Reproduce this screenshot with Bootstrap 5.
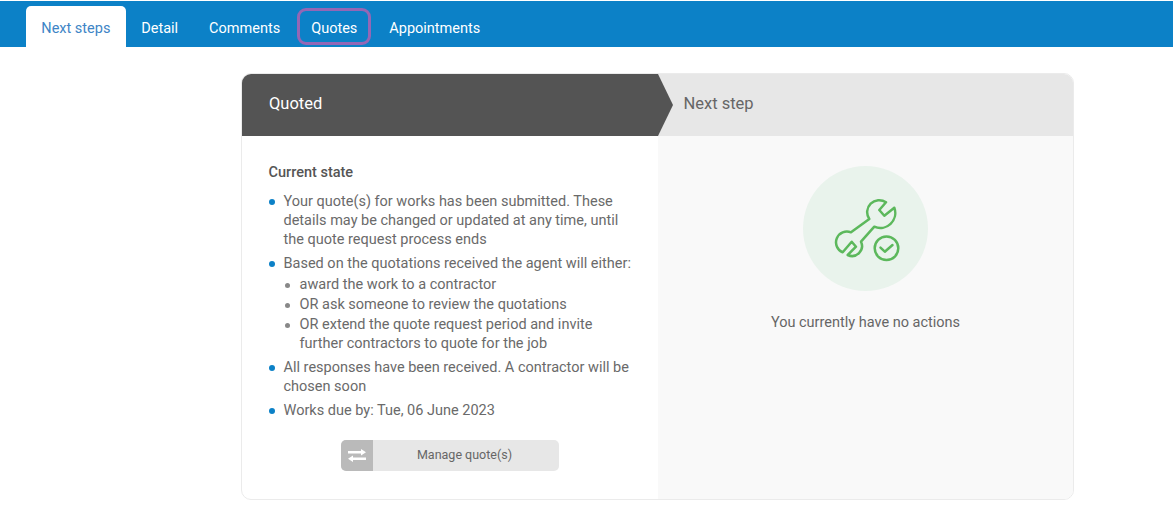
<!DOCTYPE html>
<html lang="en">
<head>
<meta charset="utf-8">
<title>Next steps</title>
<link href="https://cdn.jsdelivr.net/npm/bootstrap@5.3.0/dist/css/bootstrap.min.css" rel="stylesheet">
<style>
body{font-family:Roboto,sans-serif;font-size:14.5px;color:#6a6a6a;background:#fff;padding-top:1px;}
.tabbar{background:#0c81c7;height:46px;padding:5px 0 0 26px;}
.tabbar .nav-link{color:#fff;font-size:14.5px;line-height:20px;padding:13px 15.5px 8px;border:0;position:relative;}
.tabbar .nav-link.active{background:#fff;color:#3e85c6;border-radius:5px 5px 0 0;padding-left:15.3px;padding-right:15.3px;}
.tabbar .nav-link.marked::after{content:"";position:absolute;left:0;right:0;top:2px;bottom:2px;border:3px solid #9467b5;border-radius:9px;}
.tabbar .nav-link.marked{padding-left:14.500px;padding-right:13.500px;margin-left:1px;margin-right:3px;}
.flowcard{width:833px;height:427px;margin:26px 0 0 241px;border:1px solid #ebebeb;border-radius:10px;overflow:hidden;}
.stephead{height:62px;}
.curhead{width:416px;background:#545454;color:#fff;font-size:16.5px;padding:0 0 2px 27px;position:relative;}
.curhead::after{content:"";position:absolute;top:0;bottom:0;left:100%;width:15px;background:#545454;clip-path:polygon(0 0,100% 50%,0 100%);}
.nexthead{background:#e7e7e7;color:#666;font-size:16.5px;padding:0 0 2px 25.500px;}
.curbody{width:416px;padding:27px 20px 0 26.500px;}
.statehead{font-weight:500;font-size:14.5px;line-height:19px;color:#555;margin-bottom:10px;}
.statelist{list-style:none;padding:0;margin:0;line-height:19px;}
.statelist>li{position:relative;padding-left:15px;margin-bottom:5px;}
.statelist>li::before{content:"";position:absolute;left:0;top:7px;width:6px;height:6px;border-radius:50%;background:#0c81c7;}
.sublist{list-style:none;padding:0;margin:2px 0 0;}
.sublist li{position:relative;padding-left:16px;margin-bottom:1px;}
.sublist li::before{content:"";position:absolute;left:1px;top:8px;width:5px;height:5px;border-radius:50%;background:#888;}
.managebtn{width:218px;height:31px;margin:20px 0 0 72.500px;background:#e7e7e7;border-radius:5px;overflow:hidden;font-size:12.5px;color:#666;border:0;padding:0;}
.managebtn .swapbox{width:32px;height:100%;background:#bababa;}
.managelabel{padding-right:3px;}
.nextbody{background:#f9f9f9;padding-top:30px;}
.iconround{width:125px;height:125px;border-radius:50%;background:#e9f3ec;}
.iconround svg{overflow:visible;}
.noact{margin-top:22px;line-height:19px;color:#666;}
</style>
</head>
<body>
<ul class="nav tabbar d-flex align-items-end">
  <li class="nav-item"><a class="nav-link active" href="#">Next steps</a></li>
  <li class="nav-item"><a class="nav-link" href="#">Detail</a></li>
  <li class="nav-item"><a class="nav-link" href="#">Comments</a></li>
  <li class="nav-item"><a class="nav-link marked" href="#">Quotes</a></li>
  <li class="nav-item"><a class="nav-link" href="#">Appointments</a></li>
</ul>
<div class="flowcard">
  <div class="d-flex stephead">
    <div class="curhead d-flex align-items-center">Quoted</div>
    <div class="nexthead d-flex align-items-center flex-grow-1">Next step</div>
  </div>
  <div class="d-flex" style="height:364px">
    <div class="curbody">
      <div class="statehead">Current state</div>
      <ul class="statelist">
        <li>Your quote(s) for works has been submitted. These details may be changed or updated at any time, until the quote request process ends</li>
        <li>Based on the quotations received the agent will either:
          <ul class="sublist">
            <li>award the work to a contractor</li>
            <li>OR ask someone to review the quotations</li>
            <li>OR extend the quote request period and invite further contractors to quote for the job</li>
          </ul>
        </li>
        <li>All responses have been received. A contractor will be chosen soon</li>
        <li>Works due by: Tue, 06 June 2023</li>
      </ul>
      <button type="button" class="managebtn d-flex align-items-stretch">
        <span class="swapbox d-flex align-items-center justify-content-center">
          <svg width="18" height="13" viewBox="0 0 18 13" fill="#fff"><path d="M0 2h13V0l5 3.250-5 3.250v-2H0zM18 8.500H5v-2l-5 3.250L5 13v-2h13z"/></svg>
        </span>
        <span class="managelabel flex-grow-1 d-flex align-items-center justify-content-center">Manage quote(s)</span>
      </button>
    </div>
    <div class="nextbody flex-grow-1 d-flex flex-column align-items-center">
      <div class="iconround d-flex align-items-center justify-content-center">
        <svg width="66" height="66" viewBox="0 0 66 66" fill="none" stroke="#5cb85c" stroke-width="2.500" stroke-linecap="round" stroke-linejoin="round">
          <path d="M53 6.300A12 12 0 0 0 36.300 23L18 36.300A10.500 10.500 0 0 0 9.700 56.300L18.700 45.700 23 50.700 14.700 59A10 10 0 0 0 28 45.700L41.300 30.700A15 15 0 0 0 61.300 11.700L51.300 19.700 46.300 14z"/>
          <circle cx="53.500" cy="52.300" r="11.800"/>
          <path d="M47.500 51.700l4.300 4 7.700-6.700"/>
        </svg>
      </div>
      <div class="noact">You currently have no actions</div>
    </div>
  </div>
</div>
<script src="https://cdn.jsdelivr.net/npm/bootstrap@5.3.0/dist/js/bootstrap.bundle.min.js"></script>
</body>
</html>
